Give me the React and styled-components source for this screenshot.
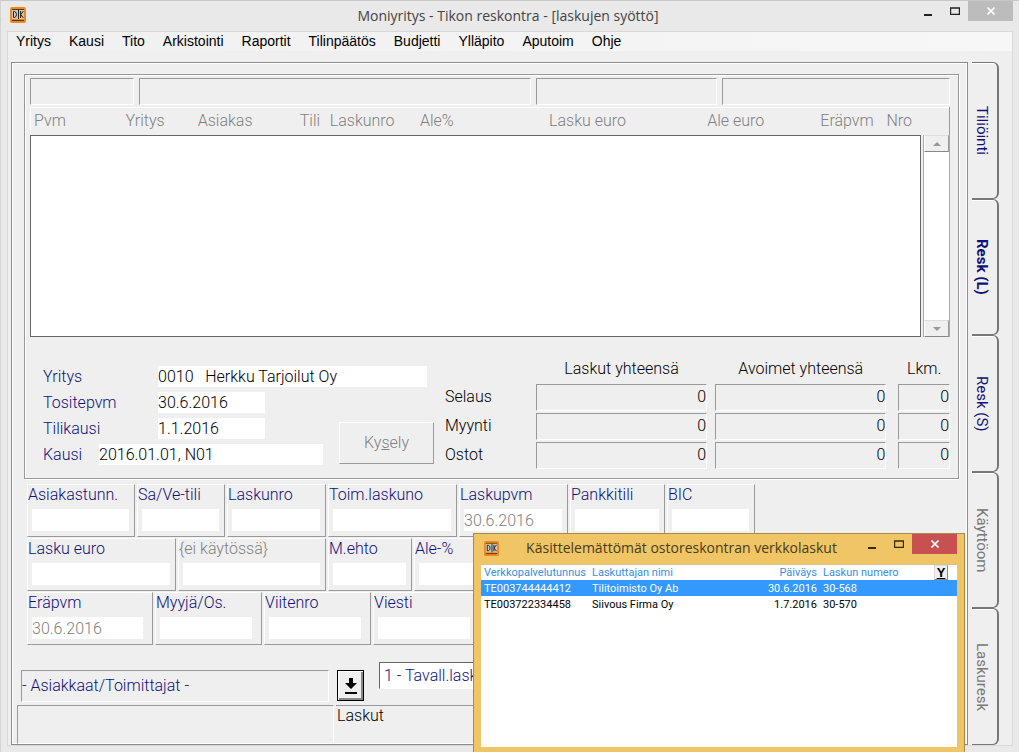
import React from "react";
import styled, { createGlobalStyle, css } from "styled-components";

const GlobalStyle = createGlobalStyle`
  * { box-sizing: border-box; }
  body {
    margin: 0;
    background: #e9e9e9;
    font: 300 16px/20px Roboto, "Liberation Sans", sans-serif;
    color: #000;
  }
  button, input { font: inherit; color: inherit; padding: 0; border-radius: 0; }
  table { border-collapse: collapse; table-layout: fixed; width: 100%; }
  th, td { padding: 0; font-weight: inherit; text-align: left; white-space: nowrap; }
`;

const sunken = css`
  border: 1px solid;
  border-color: #999 #fff #fff #999;
`;

const raised = css`
  border: 1px solid;
  border-color: #fff #999 #999 #fff;
`;

const Window = styled.div`
  position: relative;
  min-height: 100vh;
  display: flex;
  flex-direction: column;
  border-top: 1px solid #c8c8c8;
  border-left: 1px solid #d4d4d4;
  overflow: hidden;
`;

const TitleBar = styled.header`
  display: flex;
  align-items: flex-start;
  height: 30px;
  padding: 0 6px 0 9px;
  .title {
    flex: 1;
    margin: 0;
    padding-left: 76px;
    text-align: center;
    font: 400 14px/30px "Open Sans", "Noto Sans", sans-serif;
    color: #444;
  }
  svg.logo { margin-top: 6px; }
`;

const WindowButton = styled.button`
  display: flex;
  align-items: center;
  justify-content: center;
  width: ${(p) => (p.$close ? 45 : 27)}px;
  height: 20px;
  border: 0;
  background: ${(p) => p.$close || "transparent"};
`;

const Client = styled.div`
  flex: 1;
  display: flex;
  flex-direction: column;
  margin: 0 6px 6px;
  border: 1px solid #d9d9d9;
  background: #efefef;
`;

const MenuBar = styled.nav`
  display: flex;
  gap: 18px;
  height: 19px;
  padding-left: 8px;
  background: linear-gradient(90deg, #f0f0f0, #f7f7f7);
  a {
    font: 400 14px/19px "Liberation Sans", Arial, sans-serif;
    color: #000;
    text-decoration: none;
  }
`;

const Workspace = styled.main`
  flex: 1;
  display: flex;
  gap: 4px;
  padding: 11px 13px 0 3px;
`;

const Panel = styled.section`
  flex: 1;
  min-width: 0;
  display: flex;
  flex-direction: column;
  border: 1px solid #8c8c8c;
  box-shadow: inset 1px 1px #fff, inset -1px -1px #fff;
`;

const SideTabs = styled.div`
  display: flex;
  flex-direction: column;
  width: 27px;
`;

const SideTab = styled.button`
  flex: 1;
  writing-mode: vertical-rl;
  border: 0 solid #777;
  border-width: 1px 2px 1px 0;
  border-radius: 0 6px 6px 0;
  background: none;
  box-shadow: inset 0 1px #fff;
  padding-right: 5px;
  font-size: 15px;
  font-weight: ${(p) => (p.$active ? 700 : 400)};
  color: ${(p) => (p.$muted ? "#777" : "#10107c")};
`;

const InvoiceGroup = styled.div`
  margin: 11px 8px 0 12px;
  padding: 3px 8px 7px 5px;
  border: 1px solid #999;
  box-shadow: inset 1px 1px #fff, 1px 1px #fff;
`;

const Readouts = styled.div`
  display: grid;
  grid-template-columns: 104fr 392fr 181fr 228fr;
  gap: 5px;
  margin-bottom: 2px;
  div { height: 27px; ${sunken} }
`;

const ListHeader = styled.table`
  height: 28px;
  ${raised}
  border-bottom: 0;
  color: #808080;
  th { padding-bottom: 2px; }
  th:first-child { padding-left: 3px; }
`;

const ListArea = styled.div`
  display: flex;
  height: 202px;
`;

const ListBody = styled.div`
  flex: 1;
  border: 1px solid #666;
  background: #fff;
`;

const ScrollBar = styled.div`
  display: flex;
  flex-direction: column;
  justify-content: space-between;
  width: 27px;
  margin-left: 2px;
  border: 1px solid #aaa;
  border-width: 0 1px;
  background: #fff;
  button {
    display: flex;
    align-items: center;
    justify-content: center;
    height: 17px;
    background: #efefef;
    border: 1px solid;
    border-color: #ddd #999 #888 #fff;
  }
`;

const Summary = styled.div`
  display: flex;
  padding: 22px 0 0 13px;
`;

const Info = styled.div`
  display: flex;
  flex-direction: column;
  gap: 5px;
  width: 296px;
  padding-top: 7px;
`;

/* the company name runs past the column, over the button's space */
const InfoRow = styled.label`
  display: flex;
  line-height: 21px;
  color: #10107c;
  span { flex: none; width: ${(p) => (p.$narrow ? 56 : 115)}px; }
  input {
    flex: none;
    width: ${(p) => p.$width}px;
    height: 21px;
    border: 0;
    background: #fff;
    color: #000;
  }
`;

const QueryButton = styled.button`
  width: 95px;
  height: 42px;
  margin-top: 63px;
  ${raised}
  background: none;
  color: #808080;
`;

const Totals = styled.table`
  flex: 1;
  width: auto;
  margin-left: 11px;
  th { height: 20px; vertical-align: top; }
  thead th { height: 25px; text-align: center; padding-right: 8px; }
  thead th:last-child { padding: 0 0 0 4px; }
  tbody th { padding-top: 3px; }
  td { padding: 0 8px 2px 0; }
  td:last-child { padding: 0 0 2px 4px; }
`;

const Amount = styled.output`
  display: block;
  height: 27px;
  line-height: 24px;
  text-align: right;
  ${sunken}
`;

const FieldRows = styled.div`
  display: grid;
  gap: 1px;
  padding: 5px 0 0 15px;
`;

const FieldRow = styled.div`
  display: flex;
  gap: 2px;
`;

const Field = styled.label`
  display: flex;
  flex-direction: column;
  gap: 4px;
  width: ${(p) => p.$width}px;
  height: 53px;
  padding: 0 ${(p) => (p.$loose ? 9 : 5)}px 0 4px;
  ${raised}
  color: ${(p) => (p.$muted ? "#808080" : "#10107c")};
  span { height: 20px; margin-left: -4px; white-space: nowrap; }
  input {
    width: 100%;
    height: 22px;
    border: 0;
    background: #fff;
    color: #808080;
  }
`;

const SourceRow = styled.div`
  display: flex;
  align-items: flex-start;
  padding: 17px 0 3px 9px;
`;

const Source = styled.div`
  width: 308px;
  height: 32px;
  margin-top: 8px;
  line-height: 30px;
  ${sunken}
  color: #10107c;
`;

const PickButton = styled.button`
  display: flex;
  align-items: center;
  justify-content: center;
  width: 27px;
  height: 31px;
  margin: 8px 15px 0 8px;
  border: 1px solid #000;
  background: #efefef;
  box-shadow: inset 1px 1px #fff, inset -2px -2px #888;
`;

const InvoiceType = styled.input`
  width: 220px;
  height: 27px;
  border: 1px solid;
  border-color: #666 #fff #fff #666;
  background: #fff;
  && { color: #10107c; padding-left: 4px; }
`;

const StatusBar = styled.footer`
  display: flex;
  gap: 2px;
  height: 39px;
  margin: 0 8px 0 5px;
  div { ${sunken} }
  div:first-child { width: 317px; }
  div:last-child { flex: 1; border-left: 0; padding-left: 1px; }
`;

const Popup = styled.section`
  position: absolute;
  right: 54px;
  bottom: 0;
  display: flex;
  flex-direction: column;
  width: 492px;
  height: 219px;
  padding: 0 7px 5px;
  border: 1px solid #a98a45;
  border-bottom: 0;
  background: #efc565;
`;

const PopupTitle = styled.header`
  display: flex;
  align-items: flex-start;
  height: 30px;
  padding-left: 3px;
  svg.logo { margin-top: 7px; }
  .title {
    flex: 1;
    margin: 0;
    padding-left: 6px;
    text-align: center;
    white-space: nowrap;
    font: 400 14px/28px "Open Sans", "Noto Sans", sans-serif;
    color: #4a3c1c;
  }
`;

const PopupBody = styled.div`
  flex: 1;
  border: 1px solid #d8c48c;
  border-width: 1px 0 0;
  background: #fff;
`;

const EInvoices = styled.table`
  font-size: 11px;
  line-height: 15px;
  font-weight: 400;
  th, td { height: 16px; padding: 0 3px; }
  th { height: 15px; color: #3a8edb; }
  th:nth-child(3), td:nth-child(3) { text-align: right; }
`;

const InvoiceRow = styled.tr`
  background: ${(p) => (p.$selected ? "#3399ff" : "#fff")};
  color: ${(p) => (p.$selected ? "#fff" : "#000")};
`;

const FilterButton = styled.button`
  display: block;
  width: 14px;
  height: 15px;
  border: 1px solid;
  border-color: #ddd #888 #888 #ddd;
  background: #efefef;
  && {
    color: #000;
    font: 700 13px/12px "Liberation Sans", Arial, sans-serif;
    text-decoration: underline;
  }
`;

const Logo = ({ size }) => (
  <svg className="logo" width={size} height={size} viewBox="0 0 16 16">
    <rect width="16" height="16" rx="2" fill="#f0891c" />
    <path d="M2 2.5h12M2 13.5h12" stroke="#5a3408" strokeWidth="1" />
    <rect x="2" y="3" width="12" height="9" fill="#cfc8b8" />
    <path d="M3.5 4.5v6h1q2-.5 2-3t-2-3zM8.5 3v9M10.6 4v7M13.4 4l-2.6 3.5 2.6 3.5" fill="none" stroke="#222" strokeWidth="1" />
  </svg>
);

const WindowButtons = ({ color, close }) => (
  <>
    <WindowButton aria-label="Pienennä">
      <svg width="8" height="12"><path d="M0 10h8" stroke={color} strokeWidth="2" /></svg>
    </WindowButton>
    <WindowButton aria-label="Suurenna">
      <svg width="10" height="8"><path d="M.5 1v6.5h9V1M0 1h10" fill="none" stroke={color} strokeWidth="1.4" /></svg>
    </WindowButton>
    <WindowButton aria-label="Sulje" $close={close}>
      <svg width="8" height="8"><path d="M.5.5l7 7m0-7l-7 7" stroke="#fff" strokeWidth="1.6" /></svg>
    </WindowButton>
  </>
);

const menus = ["Yritys", "Kausi", "Tito", "Arkistointi", "Raportit", "Tilinpäätös", "Budjetti", "Ylläpito", "Aputoim", "Ohje"];

const columns = [
  ["Pvm", 95],
  ["Yritys", 72],
  ["Asiakas", 102],
  ["Tili", 30],
  ["Laskunro", 90],
  ["Ale%", 129],
  ["Lasku euro", 158],
  ["Ale euro", 113],
  ["Eräpvm", 66],
  ["Nro", 63],
];
const columnsTotal = columns.reduce((sum, [, width]) => sum + width, 0);

const infoRows = [
  { label: "Yritys", value: "0010\u00a0\u00a0\u00a0Herkku Tarjoilut Oy", width: 269 },
  { label: "Tositepvm", value: "30.6.2016", width: 107 },
  { label: "Tilikausi", value: "1.1.2016", width: 107 },
  { label: "Kausi", value: "2016.01.01, N01", width: 224, narrow: true },
];

const fieldRows = [
  [
    { label: "Asiakastunn.", width: 108 },
    { label: "Sa/Ve-tili", width: 88 },
    { label: "Laskunro", width: 99 },
    { label: "Toim.laskuno", width: 129 },
    { label: "Laskupvm", width: 109, value: "30.6.2016" },
    { label: "Pankkitili", width: 95 },
    { label: "BIC", width: 88 },
  ],
  [
    { label: "Lasku euro", width: 149 },
    { label: "{ei käytössä}", width: 148, muted: true },
    { label: "M.ehto", width: 84 },
    { label: "Ale-%", width: 100 },
  ],
  [
    { label: "Eräpvm", width: 126, value: "30.6.2016", loose: true },
    { label: "Myyjä/Os.", width: 107, loose: true },
    { label: "Viitenro", width: 107, loose: true },
    { label: "Viesti", width: 107, loose: true },
  ],
];

const tabs = [
  { label: "Tiliöinti" },
  { label: "Resk (L)", active: true },
  { label: "Resk (S)" },
  { label: "Käyttöom", muted: true },
  { label: "Laskuresk", muted: true },
];

const eInvoices = [
  ["TE003744444412", "Tilitoimisto Oy Ab", "30.6.2016", "30-568"],
  ["TE003722334458", "Siivous Firma Oy", "1.7.2016", "30-570"],
];

const InvoiceList = () => (
  <>
    <Readouts><div /><div /><div /><div /></Readouts>
    <ListHeader>
      <colgroup>
        {columns.map(([name, width]) => (
          <col key={name} style={{ width: `${(width / columnsTotal) * 100}%` }} />
        ))}
      </colgroup>
      <thead>
        <tr>{columns.map(([name]) => <th key={name}>{name}</th>)}</tr>
      </thead>
    </ListHeader>
    <ListArea>
      <ListBody />
      <ScrollBar>
        <button aria-label="Ylös"><svg width="8" height="4"><path d="M0 4l4-4 4 4z" fill="#999" /></svg></button>
        <button aria-label="Alas"><svg width="8" height="4"><path d="M0 0l4 4 4-4z" fill="#999" /></svg></button>
      </ScrollBar>
    </ListArea>
  </>
);

const TotalsTable = () => (
  <Totals>
    <colgroup>
      <col style={{ width: "18%" }} />
      <col style={{ width: "35.5%" }} />
      <col style={{ width: "35.5%" }} />
      <col />
    </colgroup>
    <thead>
      <tr><td /><th>Laskut yhteensä</th><th>Avoimet yhteensä</th><th>Lkm.</th></tr>
    </thead>
    <tbody>
      {["Selaus", "Myynti", "Ostot"].map((name) => (
        <tr key={name}>
          <th>{name}</th>
          <td><Amount>0</Amount></td>
          <td><Amount>0</Amount></td>
          <td><Amount>0</Amount></td>
        </tr>
      ))}
    </tbody>
  </Totals>
);

const EInvoicePopup = () => (
  <Popup>
    <PopupTitle>
      <Logo size={15} />
      <h2 className="title">Käsittelemättömät ostoreskontran verkkolaskut</h2>
      <WindowButtons color="#3a2a08" close="#c75050" />
    </PopupTitle>
    <PopupBody>
      <EInvoices>
        <colgroup>
          <col style={{ width: 108 }} />
          <col style={{ width: 132 }} />
          <col style={{ width: 99 }} />
          <col style={{ width: 111 }} />
          <col />
        </colgroup>
        <thead>
          <tr>
            <th>Verkkopalvelutunnus</th>
            <th>Laskuttajan nimi</th>
            <th>Päiväys</th>
            <th>Laskun numero</th>
            <th><FilterButton>Y</FilterButton></th>
          </tr>
        </thead>
        <tbody>
          {eInvoices.map((cells, i) => (
            <InvoiceRow key={cells[0]} $selected={i === 0}>
              {cells.map((cell) => <td key={cell}>{cell}</td>)}
              <td />
            </InvoiceRow>
          ))}
        </tbody>
      </EInvoices>
    </PopupBody>
  </Popup>
);

const App = () => (
  <>
    <GlobalStyle />
    <Window>
      <TitleBar>
        <Logo size={16} />
        <h1 className="title">Moniyritys - Tikon reskontra - [laskujen syöttö]</h1>
        <WindowButtons color="#222" close="#bcbcbc" />
      </TitleBar>
      <Client>
        <MenuBar>
          {menus.map((menu) => <a key={menu} href="#">{menu}</a>)}
        </MenuBar>
        <Workspace>
          <Panel>
            <InvoiceGroup>
              <InvoiceList />
              <Summary>
                <Info>
                  {infoRows.map(({ label, value, width, narrow }) => (
                    <InfoRow key={label} $width={width} $narrow={narrow}>
                      <span>{label}</span>
                      <input type="text" defaultValue={value} />
                    </InfoRow>
                  ))}
                </Info>
                <QueryButton>Ky<u>s</u>ely</QueryButton>
                <TotalsTable />
              </Summary>
            </InvoiceGroup>
            <FieldRows>
              {fieldRows.map((row) => (
                <FieldRow key={row[0].label}>
                  {row.map(({ label, width, value, muted, loose }) => (
                    <Field key={label} $width={width} $muted={muted} $loose={loose}>
                      <span>{label}</span>
                      <input type="text" defaultValue={value} />
                    </Field>
                  ))}
                </FieldRow>
              ))}
            </FieldRows>
            <SourceRow>
              <Source>- Asiakkaat/Toimittajat -</Source>
              <PickButton aria-label="Valitse">
                <svg width="12" height="16"><path d="M4 0h4v5h4l-6 6-6-6h4zM0 14h12v2H0z" /></svg>
              </PickButton>
              <InvoiceType type="text" aria-label="Laskutyyppi" defaultValue="1 - Tavall.lasku" />
            </SourceRow>
            <StatusBar>
              <div />
              <div>Laskut</div>
            </StatusBar>
          </Panel>
          <SideTabs>
            {tabs.map(({ label, active, muted }) => (
              <SideTab key={label} $active={active} $muted={muted}>{label}</SideTab>
            ))}
          </SideTabs>
        </Workspace>
      </Client>
      <EInvoicePopup />
    </Window>
  </>
);

export default App;
